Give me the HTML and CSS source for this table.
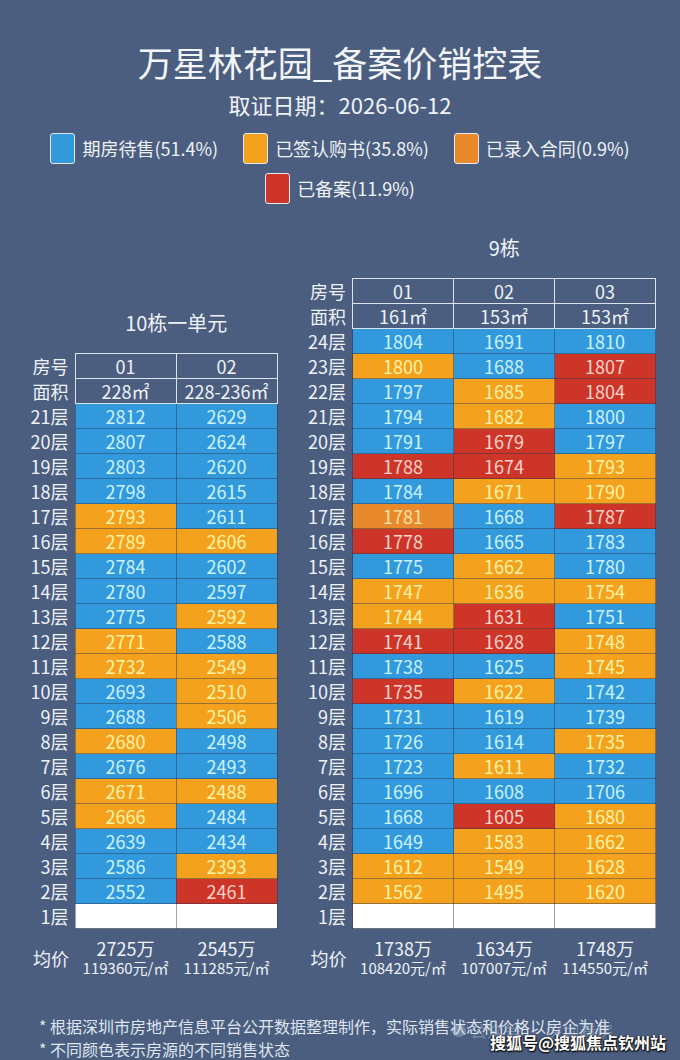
FILE: index.html
```html
<!DOCTYPE html>
<html lang="zh-CN">
<head>
<meta charset="utf-8">
<title>万星林花园_备案价销控表</title>
<link rel="stylesheet" href="styles.css">
</head>
<body>
<div class="page">
  <h1 class="title">万星林花园_备案价销控表</h1>
  <div class="date">取证日期：2026-06-12</div>
  <div class="legend">
    <div class="legend-row">
      <div class="legend-item"><span class="swatch b"></span>期房待售(51.4%)</div>
      <div class="legend-item"><span class="swatch o"></span>已签认购书(35.8%)</div>
      <div class="legend-item"><span class="swatch d"></span>已录入合同(0.9%)</div>
    </div>
    <div class="legend-row">
      <div class="legend-item"><span class="swatch r"></span>已备案(11.9%)</div>
    </div>
  </div>

  <div class="buildings">
    <div class="block">
      <div class="caption">10栋一单元</div>
      <table class="sheet cols-2">
        <colgroup><col class="c-lab"><col class="c-unit"><col class="c-unit"></colgroup>
        <thead>
          <tr><th class="lab">房号</th><th class="hd">01</th><th class="hd">02</th></tr>
          <tr><th class="lab">面积</th><th class="hd">228㎡</th><th class="hd">228-236㎡</th></tr>
        </thead>
        <tbody>
          <tr><th class="lab">21层</th><td class="b">2812</td><td class="b">2629</td></tr>
          <tr><th class="lab">20层</th><td class="b">2807</td><td class="b">2624</td></tr>
          <tr><th class="lab">19层</th><td class="b">2803</td><td class="b">2620</td></tr>
          <tr><th class="lab">18层</th><td class="b">2798</td><td class="b">2615</td></tr>
          <tr><th class="lab">17层</th><td class="o">2793</td><td class="b">2611</td></tr>
          <tr><th class="lab">16层</th><td class="o">2789</td><td class="o">2606</td></tr>
          <tr><th class="lab">15层</th><td class="b">2784</td><td class="b">2602</td></tr>
          <tr><th class="lab">14层</th><td class="b">2780</td><td class="b">2597</td></tr>
          <tr><th class="lab">13层</th><td class="b">2775</td><td class="o">2592</td></tr>
          <tr><th class="lab">12层</th><td class="o">2771</td><td class="b">2588</td></tr>
          <tr><th class="lab">11层</th><td class="o">2732</td><td class="o">2549</td></tr>
          <tr><th class="lab">10层</th><td class="b">2693</td><td class="o">2510</td></tr>
          <tr><th class="lab">9层</th><td class="b">2688</td><td class="o">2506</td></tr>
          <tr><th class="lab">8层</th><td class="o">2680</td><td class="b">2498</td></tr>
          <tr><th class="lab">7层</th><td class="b">2676</td><td class="b">2493</td></tr>
          <tr><th class="lab">6层</th><td class="o">2671</td><td class="o">2488</td></tr>
          <tr><th class="lab">5层</th><td class="o">2666</td><td class="b">2484</td></tr>
          <tr><th class="lab">4层</th><td class="b">2639</td><td class="b">2434</td></tr>
          <tr><th class="lab">3层</th><td class="b">2586</td><td class="o">2393</td></tr>
          <tr><th class="lab">2层</th><td class="b">2552</td><td class="r">2461</td></tr>
          <tr><th class="lab">1层</th><td class="w"></td><td class="w"></td></tr>
        </tbody>
        <tfoot>
          <tr class="avg">
            <th class="lab avg-lab">均价</th>
            <td><div class="total">2725万</div><div class="unit">119360元/㎡</div></td>
            <td><div class="total">2545万</div><div class="unit">111285元/㎡</div></td>
          </tr>
        </tfoot>
      </table>
    </div>

    <div class="block">
      <div class="caption">9栋</div>
      <table class="sheet cols-3">
        <colgroup><col class="c-lab"><col class="c-unit"><col class="c-unit"><col class="c-unit"></colgroup>
        <thead>
          <tr><th class="lab">房号</th><th class="hd">01</th><th class="hd">02</th><th class="hd">03</th></tr>
          <tr><th class="lab">面积</th><th class="hd">161㎡</th><th class="hd">153㎡</th><th class="hd">153㎡</th></tr>
        </thead>
        <tbody>
          <tr><th class="lab">24层</th><td class="b">1804</td><td class="b">1691</td><td class="b">1810</td></tr>
          <tr><th class="lab">23层</th><td class="o">1800</td><td class="b">1688</td><td class="r">1807</td></tr>
          <tr><th class="lab">22层</th><td class="b">1797</td><td class="o">1685</td><td class="r">1804</td></tr>
          <tr><th class="lab">21层</th><td class="b">1794</td><td class="o">1682</td><td class="b">1800</td></tr>
          <tr><th class="lab">20层</th><td class="b">1791</td><td class="r">1679</td><td class="b">1797</td></tr>
          <tr><th class="lab">19层</th><td class="r">1788</td><td class="r">1674</td><td class="o">1793</td></tr>
          <tr><th class="lab">18层</th><td class="b">1784</td><td class="o">1671</td><td class="o">1790</td></tr>
          <tr><th class="lab">17层</th><td class="d">1781</td><td class="b">1668</td><td class="r">1787</td></tr>
          <tr><th class="lab">16层</th><td class="r">1778</td><td class="b">1665</td><td class="b">1783</td></tr>
          <tr><th class="lab">15层</th><td class="b">1775</td><td class="o">1662</td><td class="b">1780</td></tr>
          <tr><th class="lab">14层</th><td class="o">1747</td><td class="o">1636</td><td class="o">1754</td></tr>
          <tr><th class="lab">13层</th><td class="o">1744</td><td class="r">1631</td><td class="b">1751</td></tr>
          <tr><th class="lab">12层</th><td class="r">1741</td><td class="r">1628</td><td class="o">1748</td></tr>
          <tr><th class="lab">11层</th><td class="b">1738</td><td class="b">1625</td><td class="o">1745</td></tr>
          <tr><th class="lab">10层</th><td class="r">1735</td><td class="o">1622</td><td class="b">1742</td></tr>
          <tr><th class="lab">9层</th><td class="b">1731</td><td class="b">1619</td><td class="b">1739</td></tr>
          <tr><th class="lab">8层</th><td class="b">1726</td><td class="b">1614</td><td class="o">1735</td></tr>
          <tr><th class="lab">7层</th><td class="b">1723</td><td class="o">1611</td><td class="b">1732</td></tr>
          <tr><th class="lab">6层</th><td class="b">1696</td><td class="b">1608</td><td class="b">1706</td></tr>
          <tr><th class="lab">5层</th><td class="b">1668</td><td class="r">1605</td><td class="o">1680</td></tr>
          <tr><th class="lab">4层</th><td class="b">1649</td><td class="o">1583</td><td class="o">1662</td></tr>
          <tr><th class="lab">3层</th><td class="o">1612</td><td class="o">1549</td><td class="o">1628</td></tr>
          <tr><th class="lab">2层</th><td class="o">1562</td><td class="o">1495</td><td class="o">1620</td></tr>
          <tr><th class="lab">1层</th><td class="w"></td><td class="w"></td><td class="w"></td></tr>
        </tbody>
        <tfoot>
          <tr class="avg">
            <th class="lab avg-lab">均价</th>
            <td><div class="total">1738万</div><div class="unit">108420元/㎡</div></td>
            <td><div class="total">1634万</div><div class="unit">107007元/㎡</div></td>
            <td><div class="total">1748万</div><div class="unit">114550元/㎡</div></td>
          </tr>
        </tfoot>
      </table>
    </div>
  </div>

  <div class="notes">
    <p>* 根据深圳市房地产信息平台公开数据整理制作，实际销售状态和价格以房企为准</p>
    <p>* 不同颜色表示房源的不同销售状态</p>
  </div>
</div>

<div class="mark-faint"><span class="mark-dot"></span>公众号 · 深圳看房</div>
<div class="mark">搜狐号@搜狐焦点钦州站</div>
</body>
</html>
```

FILE: styles.css
```css
html, body {
  margin: 0;
  padding: 0;
}

body {
  width: 680px;
  height: 1060px;
  overflow: hidden;
  position: relative;
  background: #4b5e80;
  color: #eef2f7;
  font-family: "Noto Sans CJK SC", "Noto Sans", sans-serif;
}

.page {
  padding-top: 40px;
}

.title {
  margin: 0;
  text-align: center;
  font-size: 35px;
  line-height: 44px;
  font-weight: 400;
  color: #f2f5f9;
}

.date {
  margin-top: 5px;
  text-align: center;
  font-size: 22px;
  line-height: 30px;
  color: #eef2f7;
}

.legend {
  margin-top: 13px;
  display: flex;
  flex-direction: column;
  align-items: center;
  gap: 8px;
}

.legend-row {
  display: flex;
  align-items: center;
  gap: 25px;
  height: 32px;
}

.legend-item {
  display: flex;
  align-items: center;
  gap: 7px;
  font-size: 18px;
  line-height: 32px;
  color: #eef2f7;
}

.swatch {
  display: block;
  width: 25px;
  height: 31px;
  box-sizing: border-box;
  border: 1.5px solid #e4eaf2;
  border-radius: 3px;
}

.swatch.b { background: #3399dd; }
.swatch.o { background: #f4a21e; }
.swatch.d { background: #e8892c; }
.swatch.r { background: #cc3527; }

.buildings {
  margin-top: 29px;
  padding-left: 28px;
  display: flex;
  align-items: flex-end;
  gap: 28px;
}

.block {
  display: flex;
  flex-direction: column;
}

.caption {
  margin-left: 47px;
  margin-bottom: 15px;
  text-align: center;
  font-size: 20px;
  line-height: 30px;
  color: #eef2f7;
}

.sheet {
  border-collapse: collapse;
  table-layout: fixed;
}

.sheet.cols-2 { width: 249px; }
.sheet.cols-3 { width: 350px; }

.c-lab { width: 47px; }
.c-unit { width: 101px; }

.sheet th,
.sheet td {
  padding: 0;
  height: 24px;
  line-height: 23px;
  font-size: 18px;
  font-weight: 400;
  text-align: center;
  white-space: nowrap;
}

.sheet .lab {
  text-align: right;
  padding-right: 6px;
  color: #eef2f7;
  border: none;
}

.sheet .hd {
  border: 1px solid #dbe3ec;
  color: #eef2f7;
}

.sheet tbody td {
  border: 1px solid rgba(40, 52, 80, 0.45);
}

.sheet td.b { background: #3399dd; color: #caf3ff; }
.sheet td.o { background: #f4a21e; color: #fff3a6; }
.sheet td.d { background: #e8892c; color: #ffe3a4; }
.sheet td.r { background: #cc3527; color: #ffd3cc; }
.sheet td.w { background: #ffffff; }

.sheet .avg th,
.sheet .avg td {
  height: auto;
  padding-top: 9px;
  vertical-align: top;
  border: none;
}

.sheet .avg-lab {
  font-size: 18px;
  line-height: 40px;
  text-align: right;
}

.total {
  font-size: 18px;
  line-height: 20px;
  color: #eef2f7;
}

.unit {
  font-size: 15px;
  line-height: 19px;
  color: #eef2f7;
}

.notes {
  margin-top: 37px;
  padding-left: 39px;
  font-size: 16px;
  line-height: 23px;
  color: #dfe5ee;
}

.notes p {
  margin: 0;
}

.mark-faint {
  position: absolute;
  left: 452px;
  bottom: 18px;
  display: flex;
  align-items: center;
  gap: 4px;
  font-size: 17px;
  line-height: 22px;
  color: rgba(205, 215, 230, 0.35);
}

.mark-dot {
  display: block;
  width: 14px;
  height: 12px;
  border-radius: 50%;
  background: rgba(205, 215, 230, 0.35);
}

.mark {
  position: absolute;
  right: 14px;
  bottom: 7px;
  font-size: 16px;
  line-height: 22px;
  font-weight: 700;
  color: #ffffff;
  text-shadow: 1px 1px 1px #111, -1px 0 1px #222, 0 1px 2px #000;
}
```
